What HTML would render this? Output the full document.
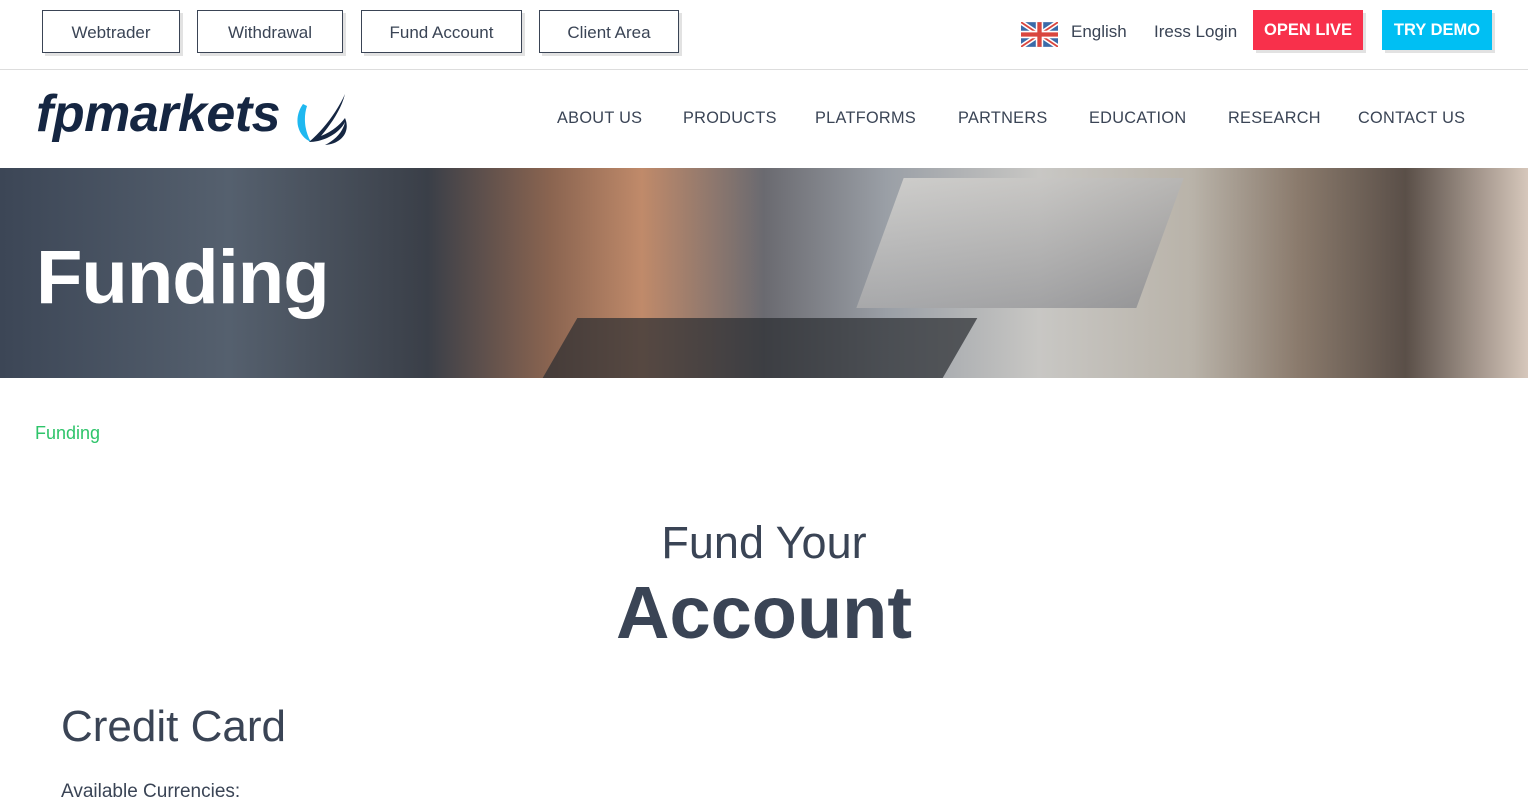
<!DOCTYPE html>
<html><head><meta charset="utf-8"><style>
*{margin:0;padding:0;box-sizing:border-box}
body{width:1528px;height:812px;overflow:hidden;background:#fff;font-family:"Liberation Sans",sans-serif;color:#3a4455;position:relative}
.tb{position:absolute;top:10px;height:43px;border:1px solid #3a4455;font-size:17px;line-height:43px;text-align:center;color:#3a4455;box-shadow:3px 3px 0 #e2e2e2}
.top-line{position:absolute;top:69px;left:0;width:1528px;height:1px;background:#ddd}
.nav{position:absolute;top:109px;font-size:16.3px;letter-spacing:0.3px;color:#3a4455}
.btn{position:absolute;top:10px;height:40px;color:#fff;font-weight:bold;font-size:16.5px;line-height:40px;text-align:center;box-shadow:3px 3px 0 #e2e2e2}
.hero{position:absolute;top:168px;left:0;width:1528px;height:210px;overflow:hidden;
background:linear-gradient(90deg,#3c4656 0%,#55606e 15%,#3a3f48 28%,#8a6450 36%,#c08a6a 42%,#6a6a70 50%,#9a9fa6 58%,#c8c7c4 68%,#b9b3a9 78%,#8a7a6c 85%,#5a4f48 92%,#d6c7bb 100%)}
</style></head><body>
<div class="tb" style="left:42px;width:138px">Webtrader</div>
<div class="tb" style="left:197px;width:146px">Withdrawal</div>
<div class="tb" style="left:361px;width:161px">Fund Account</div>
<div class="tb" style="left:539px;width:140px">Client Area</div>
<svg style="position:absolute;left:1021px;top:22px" width="37" height="25" viewBox="0 0 60 40"><rect width="60" height="40" fill="#3a6aa8"/><path d="M0 0L60 40M60 0L0 40" stroke="#fff" stroke-width="8"/><path d="M0 0L60 40M60 0L0 40" stroke="#d9463e" stroke-width="3"/><path d="M30 0V40M0 20H60" stroke="#fff" stroke-width="12"/><path d="M30 0V40M0 20H60" stroke="#d9463e" stroke-width="7"/></svg>
<div style="position:absolute;left:1071px;top:22px;font-size:17px">English</div>
<div style="position:absolute;left:1154px;top:22px;font-size:17px">Iress Login</div>
<div class="btn" style="left:1253px;width:110px;background:#f8304b">OPEN LIVE</div>
<div class="btn" style="left:1382px;width:110px;background:#00bff3">TRY DEMO</div>
<div class="top-line"></div>
<div style="position:absolute;left:36px;top:84px;font-size:52px;font-weight:bold;font-style:italic;color:#152642;letter-spacing:-0.5px">fpmarkets</div>
<svg style="position:absolute;left:293px;top:92px" width="55" height="55" viewBox="0 0 55 55"><path d="M10 12C0 26 4 44 18 50C12 40 10 26 14 14Z" fill="#1fb8f0"/><path d="M52 2C44 20 30 38 16 50C30 50 46 42 52 30C50 40 42 48 32 53C48 52 58 40 52 26C46 34 38 40 28 44C38 32 48 18 52 2Z" fill="#152642"/></svg>
<div class="nav" style="left:557px">ABOUT US</div>
<div class="nav" style="left:683px">PRODUCTS</div>
<div class="nav" style="left:815px">PLATFORMS</div>
<div class="nav" style="left:958px">PARTNERS</div>
<div class="nav" style="left:1089px">EDUCATION</div>
<div class="nav" style="left:1228px">RESEARCH</div>
<div class="nav" style="left:1358px">CONTACT US</div>
<div class="hero">
<div style="position:absolute;left:880px;top:10px;width:280px;height:130px;background:linear-gradient(160deg,#d8d6d2,#8d8e92);transform:skewX(-20deg);opacity:.8"></div>
<div style="position:absolute;left:560px;top:150px;width:400px;height:60px;background:#2a2c30;opacity:.7;transform:skewX(-30deg)"></div>
<div style="position:absolute;left:36px;top:66px;font-size:76px;font-weight:bold;color:#fff;letter-spacing:-1px">Funding</div>
</div>
<div style="position:absolute;left:35px;top:423px;font-size:18px;color:#2ec46a">Funding</div>
<div style="position:absolute;left:0;width:1528px;top:517px;text-align:center;font-size:45px;color:#3a4455">Fund Your</div>
<div style="position:absolute;left:0;width:1528px;top:570px;text-align:center;font-size:74px;font-weight:bold;color:#3a4455">Account</div>
<div style="position:absolute;left:61px;top:702px;font-size:44px;color:#3a4455">Credit Card</div>
<div style="position:absolute;left:61px;top:781px;font-size:19px;color:#3a4455">Available Currencies:</div>
</body></html>
